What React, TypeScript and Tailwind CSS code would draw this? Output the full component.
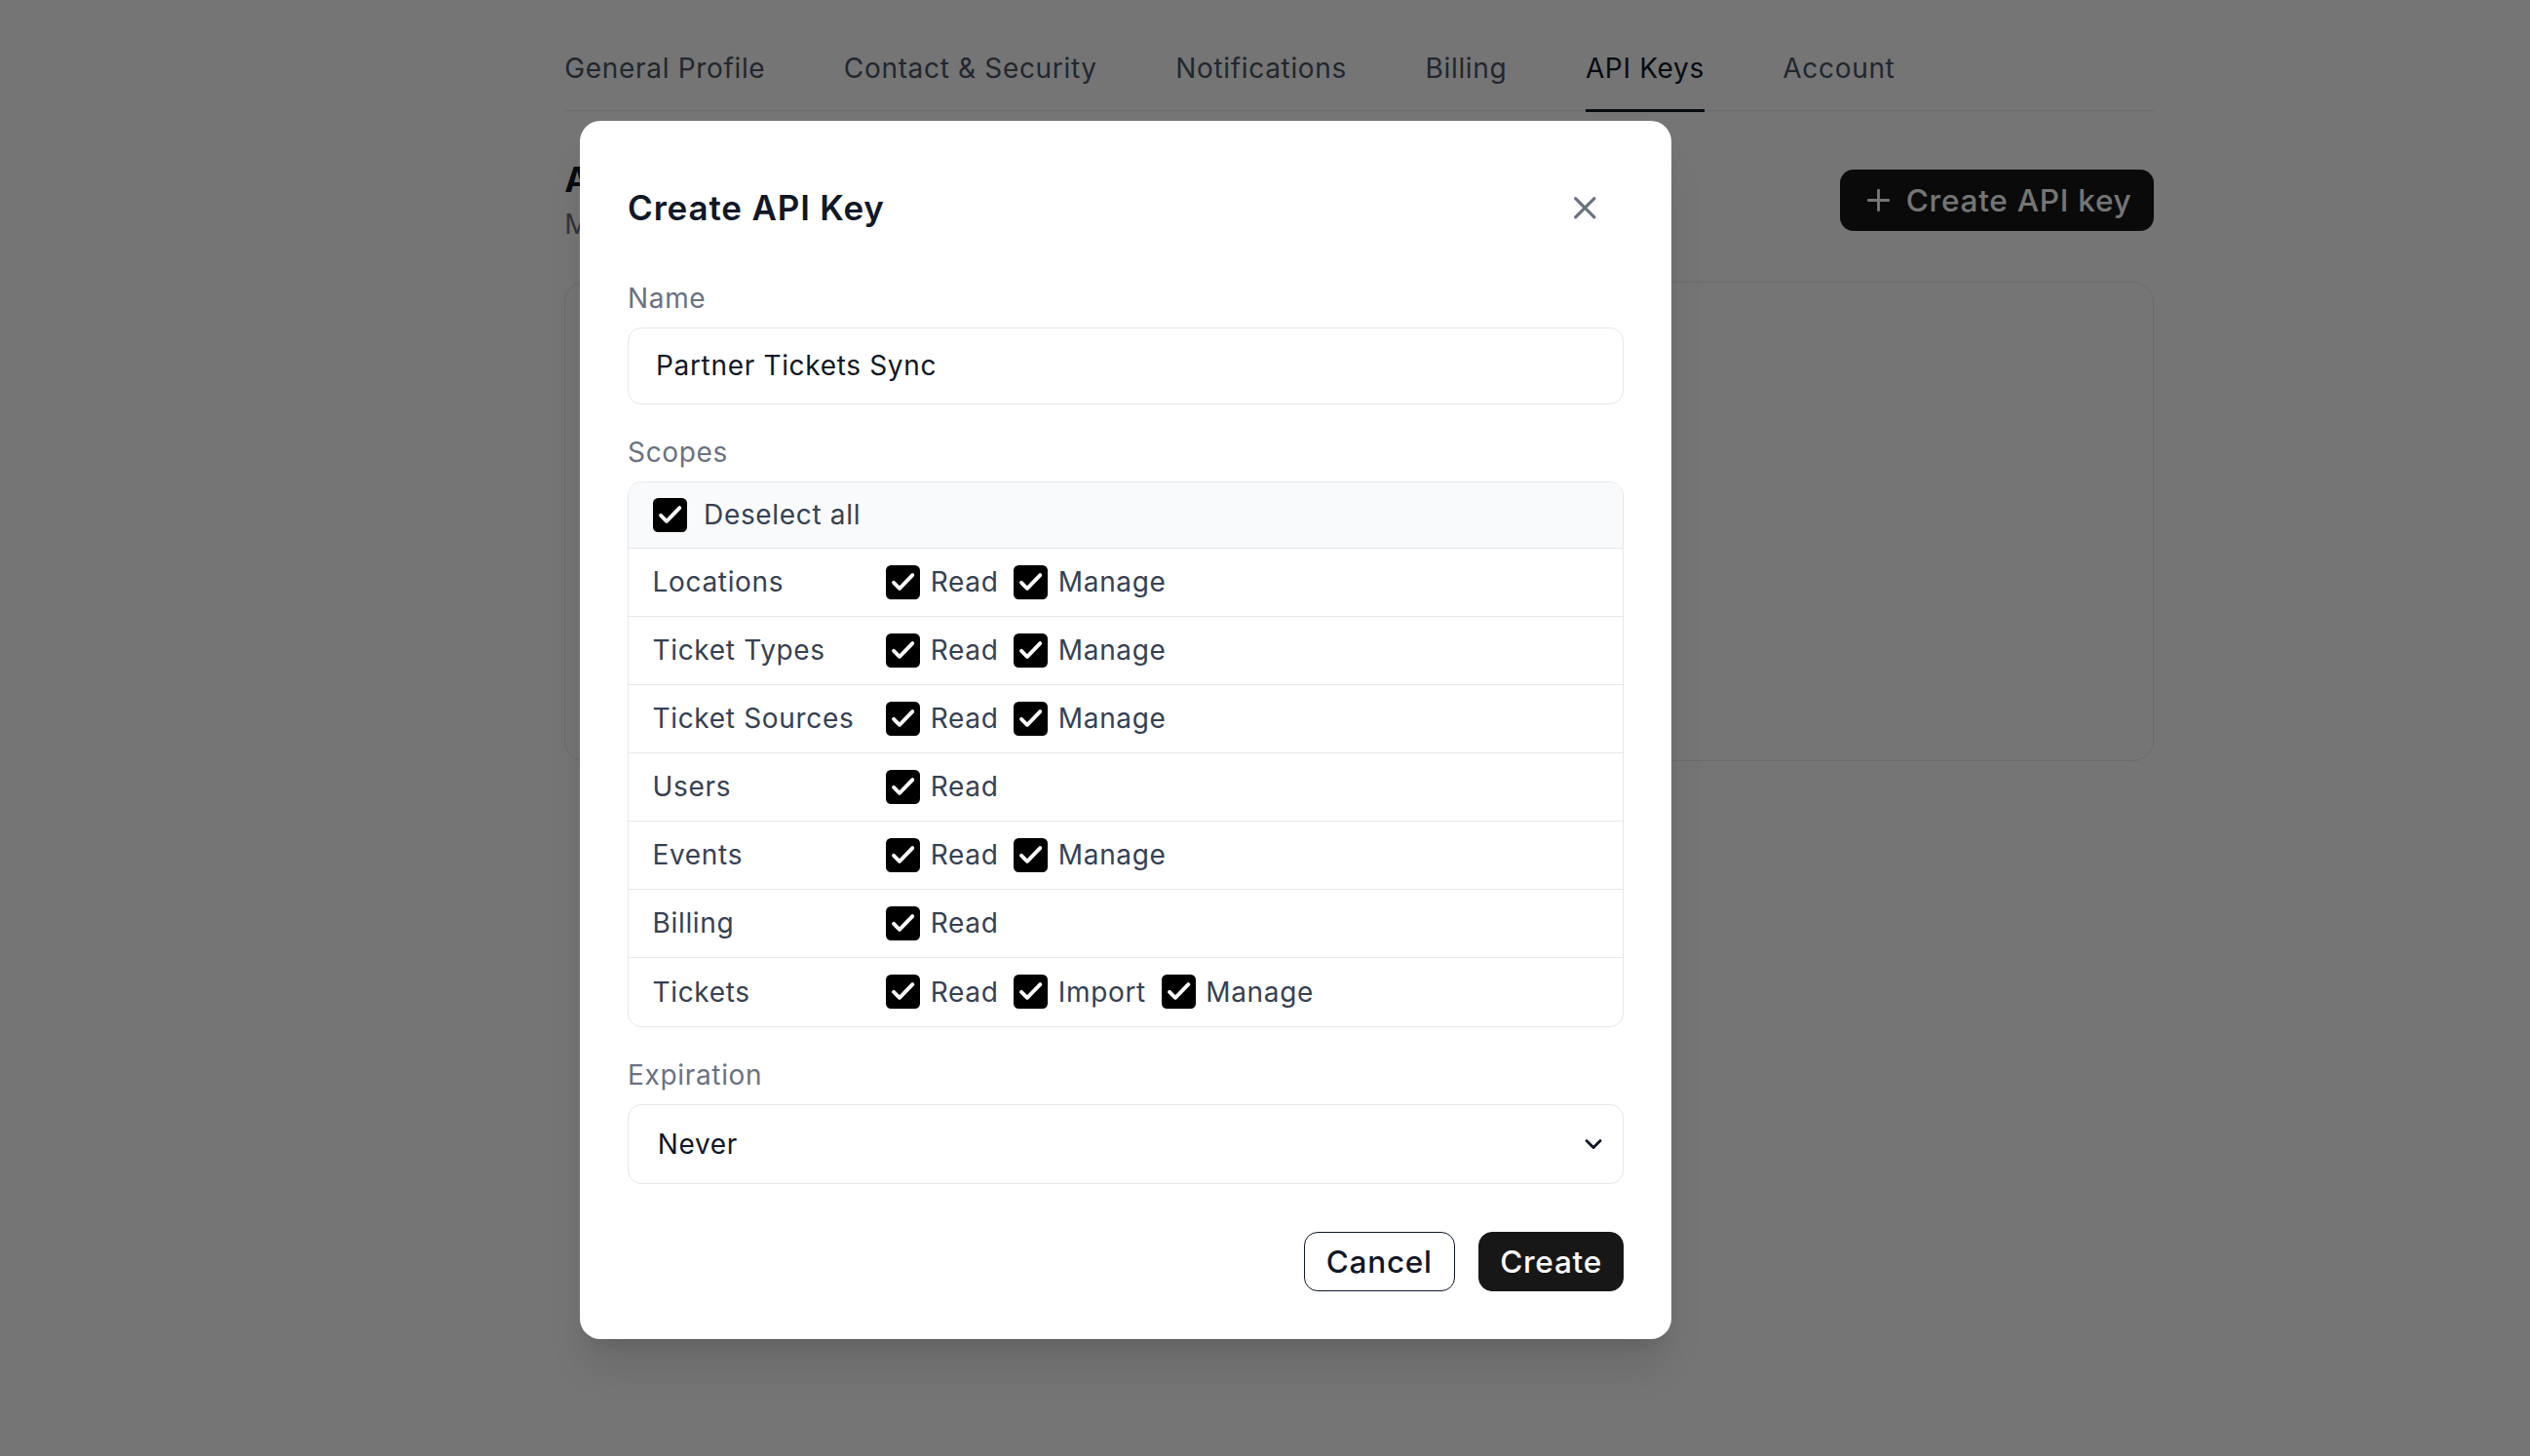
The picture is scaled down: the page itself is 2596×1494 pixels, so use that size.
import { ChevronDown, Plus, X } from "lucide-react";

const tabs = [
  "General Profile",
  "Contact & Security",
  "Notifications",
  "Billing",
  "API Keys",
  "Account",
];

const scopes = [
  { name: "Locations", perms: ["Read", "Manage"] },
  { name: "Ticket Types", perms: ["Read", "Manage"] },
  { name: "Ticket Sources", perms: ["Read", "Manage"] },
  { name: "Users", perms: ["Read"] },
  { name: "Events", perms: ["Read", "Manage"] },
  { name: "Billing", perms: ["Read"] },
  { name: "Tickets", perms: ["Read", "Import", "Manage"] },
];

function Checkbox() {
  return (
    <span className="flex size-5 shrink-0 items-center justify-center rounded-[3px] bg-black">
      <svg
        viewBox="0 0 20 20"
        className="size-5"
        fill="none"
        stroke="white"
        strokeWidth={2.2}
        strokeLinecap="round"
        strokeLinejoin="round"
      >
        <path d="M4.6 10.2 8 13.6l7.6-7.8" />
      </svg>
    </span>
  );
}

function CreateKeyModal() {
  return (
    <div className="absolute left-[340px] top-[71px] w-[640px] rounded-xl bg-white p-7 shadow-xl">
      {/* header */}
      <div className="flex items-center justify-between">
        <h3 className="text-xl font-semibold leading-7 text-gray-900">Create API Key</h3>
        <button className="p-3 text-gray-500">
          <X size={22} strokeWidth={2} />
        </button>
      </div>

      <div className="mt-[18px]">
        <label className="block text-base leading-6 text-gray-500">Name</label>
        <div className="mt-[5px] flex h-[45px] items-center rounded-lg border border-gray-200 px-4 text-base text-gray-900">
          Partner Tickets Sync
        </div>
      </div>

      <div className="mt-4">
        <label className="block text-base leading-6 text-gray-500">Scopes</label>
        <div className="mt-[5px] divide-y divide-gray-200 overflow-hidden rounded-lg border border-gray-200">
          <div className="flex h-[39px] items-center gap-2.5 bg-gray-50 px-3.5 text-base text-gray-700">
            <Checkbox />
            <span>Deselect all</span>
          </div>
          {scopes.map((s) => (
            <div key={s.name} className="flex h-10 items-center px-3.5 text-base text-gray-700">
              <span className="w-[137px] shrink-0">{s.name}</span>
              <div className="flex items-center gap-[9px]">
                {s.perms.map((p) => (
                  <span key={p} className="flex items-center gap-1.5">
                    <Checkbox />
                    {p}
                  </span>
                ))}
              </div>
            </div>
          ))}
        </div>
      </div>

      <div className="mt-4">
        <label className="block text-base leading-6 text-gray-500">Expiration</label>
        <div className="mt-[5px] flex h-[47px] items-center justify-between rounded-lg border border-gray-200 pl-[17px] pr-[9px] text-base text-gray-900">
          <span>Never</span>
          <ChevronDown size={16} strokeWidth={2.5} className="text-gray-900" />
        </div>
      </div>

      <div className="mt-7 flex justify-end gap-3.5">
        <button className="rounded-lg border border-gray-900 bg-white px-[12.5px] py-[3px] text-lg font-medium leading-7 text-gray-900">
          Cancel
        </button>
        <button className="rounded-lg border border-neutral-900 bg-neutral-900 px-3 py-[3px] text-lg font-medium leading-7 text-white">
          Create
        </button>
      </div>
    </div>
  );
}

export default function App() {
  return (
    <div className="relative h-[853.7px] w-[1483.4px] overflow-hidden bg-white font-['Inter',sans-serif] [zoom:1.75] [&_*]:tracking-[0.024em]">
      <div className="ml-[331px] w-[932px] pt-7">
        <nav className="flex gap-[46px] border-b border-gray-200">
          {tabs.map((t) => (
            <span
              key={t}
              className={
                t === "API Keys"
                  ? "-mb-px border-b-2 border-gray-900 pb-3 text-base leading-6 text-gray-900"
                  : "-mb-px border-b-2 border-transparent pb-3 text-base leading-6 text-gray-600"
              }
            >
              {t}
            </span>
          ))}
        </nav>

        <div className="mt-[26px] flex items-center justify-between">
          <div>
            <h2 className="text-xl font-bold leading-7 text-gray-900">API Keys</h2>
            <p className="text-base leading-6 text-gray-500">Manage keys used to access the API.</p>
          </div>
          <button className="flex items-center gap-1.5 rounded-lg bg-neutral-900 px-[13px] py-1 text-lg font-medium leading-7 text-white">
            <Plus size={20} strokeWidth={2} />
            Create API key
          </button>
        </div>

        <div className="mt-[22px] h-[281px] rounded-xl border border-gray-200" />
      </div>

      <div className="absolute inset-0 bg-black/[0.54]" />
      <CreateKeyModal />
    </div>
  );
}
